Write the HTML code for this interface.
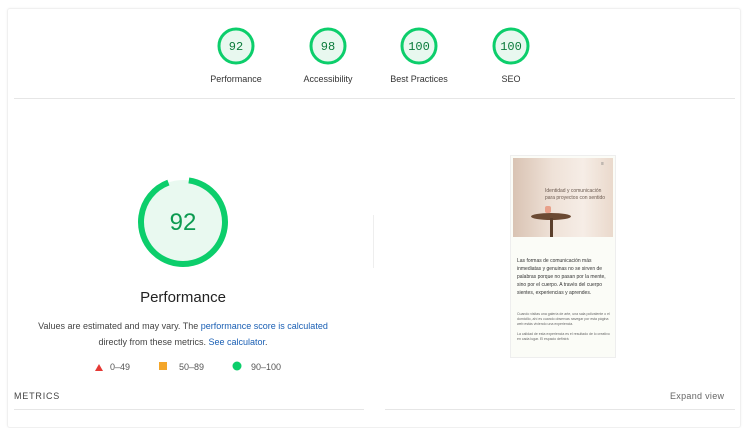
<!DOCTYPE html>
<html><head><meta charset="utf-8"><style>
*{margin:0;padding:0;box-sizing:border-box}
body{width:750px;height:416px;background:#fff;font-family:"Liberation Sans",sans-serif;overflow:hidden;position:relative}
.card{position:absolute;left:7px;top:8px;width:734px;height:420px;background:#fff;border:1px solid #f0f0f0;border-radius:3px;box-shadow:0 0 2px rgba(0,0,0,.05)}
.abs{position:absolute}
.link{color:#1a5fb4}
</style></head><body>
<div class="card"></div>
<svg class="abs" style="left:0;top:0" width="750" height="416">
<g fill="#e8f8ef" stroke="#0cce6b" stroke-width="3">
<circle cx="236" cy="46" r="17"/><circle cx="328" cy="46" r="17"/><circle cx="419" cy="46" r="17"/><circle cx="511" cy="46" r="17"/>
</g>
<g font-family="Liberation Mono,monospace" font-size="12" fill="#0a7a3a" text-anchor="middle">
<text x="236" y="50">92</text><text x="328" y="50">98</text><text x="419" y="50">100</text><text x="511" y="50">100</text>
</g>
<g font-size="9" fill="#333" text-anchor="middle" font-family="Liberation Sans,sans-serif">
<text x="236" y="82">Performance</text><text x="328" y="82">Accessibility</text><text x="419" y="82">Best Practices</text><text x="511" y="82">SEO</text>
</g>
<line x1="14" y1="98.5" x2="735" y2="98.5" stroke="#e6e6e6"/>
<circle cx="183" cy="222" r="42" fill="#e9f9f0"/>
<circle cx="183" cy="222" r="42" fill="none" stroke="#0cce6b" stroke-width="6" stroke-dasharray="242.7 263.9" transform="rotate(-82 183 222)"/>
<text x="183" y="230" text-anchor="middle" font-size="24" fill="#0c9a50" font-family="Liberation Sans,sans-serif">92</text>
<text x="183" y="302" text-anchor="middle" font-size="15" fill="#222" font-family="Liberation Sans,sans-serif">Performance</text>
<line x1="373.5" y1="215" x2="373.5" y2="268" stroke="#eee"/>
<polygon points="95,371 99,364 103,371" fill="#e53935"/>
<rect x="159" y="362" width="8" height="8" fill="#f4a62a"/>
<circle cx="237" cy="366" r="4.5" fill="#0cce6b"/>
<g font-size="9" fill="#555" font-family="Liberation Sans,sans-serif">
<text x="110" y="370">0–49</text><text x="179" y="370">50–89</text><text x="251" y="370">90–100</text>
</g>
<line x1="14" y1="409.5" x2="364" y2="409.5" stroke="#e6e6e6"/>
<line x1="385" y1="409.5" x2="735" y2="409.5" stroke="#e6e6e6"/>
</svg>
<div class="abs" style="left:20px;top:318px;width:326px;text-align:center;font-size:9px;line-height:16px;color:#444">Values are estimated and may vary. The <span class="link">performance score is calculated</span><br>directly from these metrics. <span class="link">See calculator</span>.</div>
<div class="abs" style="left:14px;top:391px;font-size:9px;letter-spacing:.8px;color:#444">METRICS</div>
<div class="abs" style="left:670px;top:391px;font-size:9px;color:#666;letter-spacing:.3px">Expand view</div>
<div class="abs" style="left:510px;top:155px;width:106px;height:203px;border:1px solid #eee;background:#fbfcf7">
 <div class="abs" style="left:2px;top:2px;width:100px;height:79px;background:linear-gradient(90deg,#d9c3b3 0%,#efe2d8 40%,#f6ede6 70%,#ead9cc 100%)">
  <div class="abs" style="left:18px;top:55px;width:40px;height:7px;border-radius:50%;background:#6b4a33"></div>
  <div class="abs" style="left:37px;top:60px;width:3px;height:19px;background:#5a3e2b"></div>
  <div class="abs" style="left:32px;top:48px;width:6px;height:7px;border-radius:2px;background:#e8a08a"></div>
  <div class="abs" style="left:32px;top:30px;font-size:5px;color:#6b5a50;line-height:7px">Identidad y comunicación<br>para proyectos con sentido</div>
  <div class="abs" style="left:88px;top:3px;font-size:5px;color:#777">≡</div>
 </div>
 <div class="abs" style="left:6px;top:101px;width:96px;font-size:5px;line-height:8px;color:#333">Las formas de comunicación más inmediatas y genuinas no se sirven de palabras porque no pasan por la mente, sino por el cuerpo. A través del cuerpo sientes, experiencias y aprendes.</div>
 <div class="abs" style="left:6px;top:156px;width:96px;font-size:3.5px;line-height:5px;color:#666">Cuando visitas una galería de arte, una sala polivalente o el domicilio, ahí es cuando observas navegar por esta página web estás viviendo una experiencia.<br><br>La calidad de esta experiencia es el resultado de lo creativo en cada lugar. El espacio definirá</div>
</div>
</body></html>
